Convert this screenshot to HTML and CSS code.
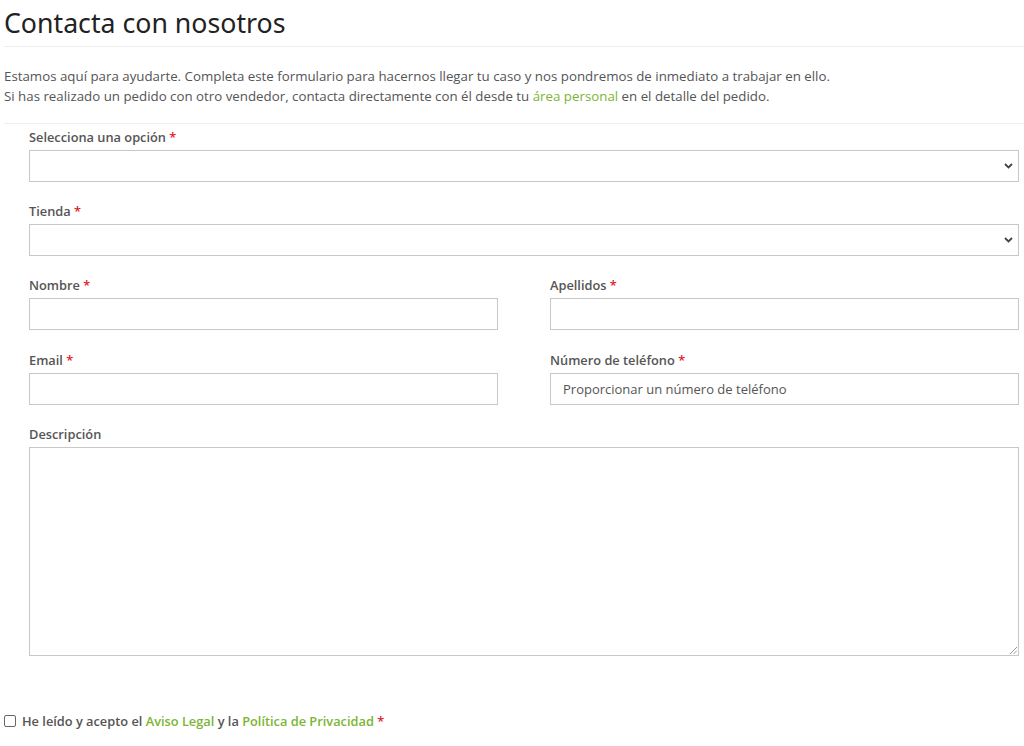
FILE: index.html
```html
<!DOCTYPE html>
<html lang="es">
<head>
<meta charset="utf-8">
<title>Contacta con nosotros</title>
<link rel="stylesheet" href="styles.css">
</head>
<body>
<div class="page">
  <h1 class="title">Contacta con nosotros</h1>
  <div class="intro">
    <p>Estamos aquí para ayudarte. Completa este formulario para hacernos llegar tu caso y nos pondremos de inmediato a trabajar en ello.<br>Si has realizado un pedido con otro vendedor, contacta directamente con él desde tu <a href="#" class="link">área personal</a> en el detalle del pedido.</p>
  </div>
  <form class="form">
    <div class="group">
      <label class="label">Selecciona una opción <span class="req">*</span></label>
      <div class="select"><span class="chev"><svg width="9" height="6" viewBox="0 0 9 6"><path d="M1 1l3.5 3.5L8 1" fill="none" stroke="#444" stroke-width="1.8"/></svg></span></div>
    </div>
    <div class="group">
      <label class="label">Tienda <span class="req">*</span></label>
      <div class="select"><span class="chev"><svg width="9" height="6" viewBox="0 0 9 6"><path d="M1 1l3.5 3.5L8 1" fill="none" stroke="#444" stroke-width="1.8"/></svg></span></div>
    </div>
    <div class="row">
      <div class="group">
        <label class="label">Nombre <span class="req">*</span></label>
        <div class="input"></div>
      </div>
      <div class="group">
        <label class="label">Apellidos <span class="req">*</span></label>
        <div class="input"></div>
      </div>
    </div>
    <div class="row">
      <div class="group">
        <label class="label">Email <span class="req">*</span></label>
        <div class="input"></div>
      </div>
      <div class="group">
        <label class="label">Número de teléfono <span class="req">*</span></label>
        <div class="input"><span class="ph">Proporcionar un número de teléfono</span></div>
      </div>
    </div>
    <div class="group">
      <label class="label">Descripción</label>
      <div class="textarea"><span class="grip"><svg width="8" height="8" viewBox="0 0 8 8"><path d="M1 8L8 1M4.5 8L8 4.5" stroke="#999" stroke-width="1"/></svg></span></div>
    </div>
  </form>
  <div class="accept">
    <span class="checkbox"></span>
    <span class="accept-text">He leído y acepto el <a href="#" class="link">Aviso Legal</a> y la <a href="#" class="link">Política de Privacidad</a> <span class="req">*</span></span>
  </div>
</div>
</body>
</html>
```
FILE: styles.css
```css
* { box-sizing: border-box; }
html, body { margin: 0; padding: 0; background: #fff; }
body { font-family: "Open Sans", "Noto Sans", sans-serif; color: #555; }
.page { padding: 0 0 0 4px; }
.title {
  margin: 0;
  font-family: "Noto Sans", sans-serif;
  font-weight: 400;
  font-size: 26.7px;
  line-height: 46px;
  color: #222;
  border-bottom: 1px solid #eee;
}
.intro { border-bottom: 1px solid #eee; padding: 19px 0 17px; }
.intro p { margin: 0; font-size: 13.3px; line-height: 20px; color: #555; }
.link { color: #7bb534; text-decoration: none; }
.form { padding: 3px 5px 0 25px; }
.group { display: flex; flex-direction: column; margin-bottom: 19px; flex: 1; }
.label { font-size: 12.8px; font-weight: 600; line-height: 20px; margin-bottom: 3px; color: #555; }
.req { color: #e4141e; }
.select, .input {
  height: 32px; border: 1px solid #c8c8c8; background: #fff;
  display: flex; align-items: center;
}
.select { justify-content: flex-end; padding-right: 5px; }
.chev { display: flex; }
.input { padding-left: 12px; }
.ph { font-size: 13px; color: #555; }
.row { display: flex; gap: 52px; }
.row + .row { margin-top: 1px; }
.textarea { height: 209px; border: 1px solid #c8c8c8; position: relative; }
.grip { position: absolute; right: 1px; bottom: 1px; display: flex; }
.accept { display: flex; align-items: center; gap: 6px; margin-top: 56px; }
.checkbox { width: 12px; height: 12px; border: 1px solid #666; border-radius: 2px; }
.accept-text { font-size: 12.8px; font-weight: 600; color: #555; }
```
